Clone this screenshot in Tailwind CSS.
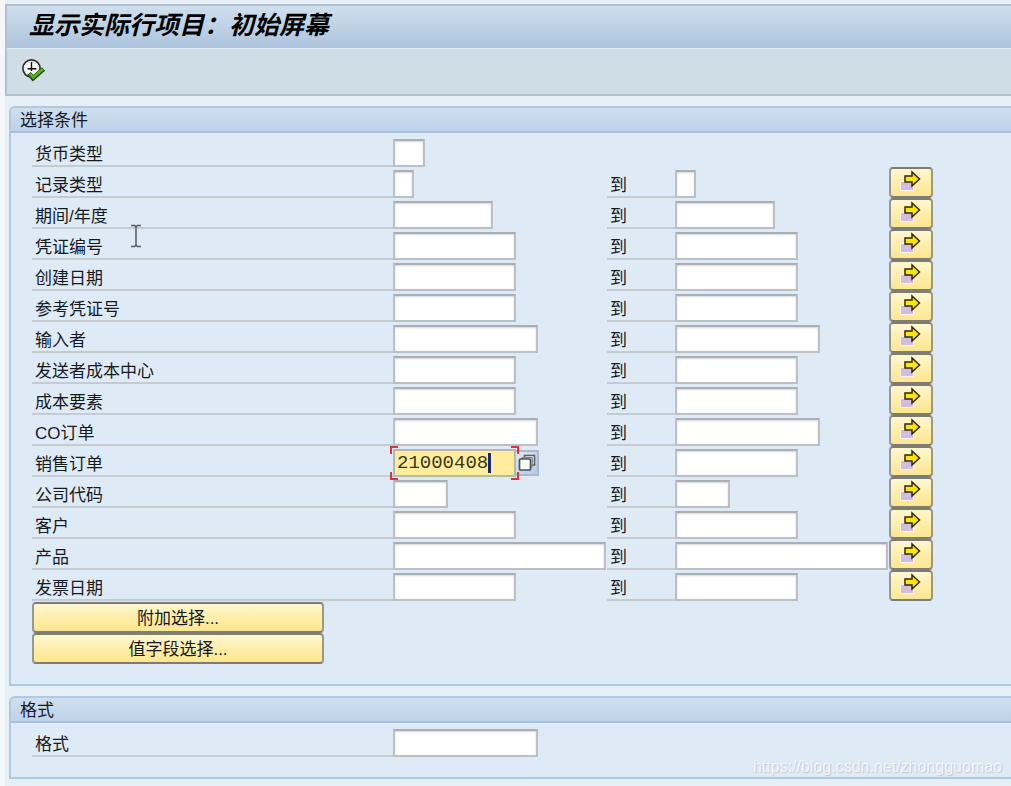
<!doctype html>
<html lang="zh-CN">
  <head>
    <meta charset="utf-8" />
    <meta name="viewport" content="width=device-width, initial-scale=1" />
    <script src="https://cdn.jsdelivr.net/npm/@tailwindcss/browser@4"></script>
    <title>显示实际行项目：初始屏幕</title>
  </head>
  <body
    class="relative min-h-screen overflow-x-hidden border-l-5 border-[#f4f7fa] bg-[#e7eff6] pt-1 font-['Liberation_Sans','Noto_Sans_CJK_SC',sans-serif] text-[17px] text-[#161a1e]"
  >
    <header class="border-y-2 border-l-2 border-[#b0c0d0] bg-[#cfdde7]">
      <h1
        class="flex h-[43px] items-center border-b border-[#e6eef5] bg-linear-to-b from-[#d0dfec] to-[#adc4dd] pb-1 pl-[22px] text-[25px] leading-none font-bold text-black italic"
      >
        显示实际行项目：初始屏幕
      </h1>
      <div class="flex h-[45px] items-center pl-3.5">
        <button type="button" aria-label="执行" class="pb-1">
          <svg class="block" width="26" height="24" viewBox="0 0 26 24">
            <circle cx="10.500" cy="10.500" r="8.600" fill="#fff" stroke="#2c2c2c" stroke-width="1.600" />
            <circle cx="10.500" cy="10.500" r="6.700" fill="none" stroke="#b9b9b9" stroke-width="1" stroke-dasharray="1.500 2" />
            <path d="M10.500 4v9M6.500 10.800h9" fill="none" stroke="#111" stroke-width="1.400" />
            <path d="M8 15.500l4 4.700L22.500 11" fill="none" stroke="#1f4d10" stroke-width="4.800" />
            <path d="M8.800 15.800l3.400 3.600L22 11" fill="none" stroke="#55b026" stroke-width="2.800" />
          </svg>
        </button>
      </div>
    </header>

    <main class="mt-2.5 ml-1 flex flex-col gap-2.5">
      <section class="rounded-tl-md border-y-2 border-l-2 border-[#b0c9e0] bg-[#deeaf6]">
        <h2
          class="h-[25px] rounded-tl-sm border-b-2 border-[#a6bfda] bg-linear-to-b from-[#cfdfee] to-[#bdd3ea] pl-[9px] leading-[26px]"
        >
          选择条件
        </h2>
        <form class="pt-[3px] pb-5 pl-[21px]">
          <div id="rows"></div>
          <div class="flex w-[292px] flex-col pt-px">
            <button
              type="button"
              class="h-[31px] rounded-sm border-2 border-x-[#9b9888] border-y-[#7f7d72] bg-linear-to-b from-[#fff7d2] via-[#feeeaa] to-[#fbe691] pt-px leading-none"
            >
              附加选择...
            </button>
            <button
              type="button"
              class="h-[31px] rounded-sm border-2 border-x-[#9b9888] border-y-[#7f7d72] bg-linear-to-b from-[#fff7d2] via-[#feeeaa] to-[#fbe691] pt-px leading-none"
            >
              值字段选择...
            </button>
          </div>
        </form>
      </section>

      <section class="rounded-tl-md border-y-2 border-l-2 border-[#b0c9e0] bg-[#deeaf6]">
        <h2
          class="h-[25px] rounded-tl-sm border-b-2 border-[#a6bfda] bg-linear-to-b from-[#cfdfee] to-[#bdd3ea] pl-[9px] leading-[26px]"
        >
          格式
        </h2>
        <div class="flex items-end pt-[3px] pb-5 pl-[21px]">
          <label for="layout" class="h-[31px] w-[361px] border-b-2 border-[#c6cbd0] pt-[5px] pl-[3px] leading-7">格式</label>
          <input
            id="layout"
            class="h-7 w-[145px] border-2 border-[#bcc0c5] border-t-[#abafb4] bg-white px-0.5 shadow-[inset_0_1px_2px_#d5d5d5] outline-none"
          />
        </div>
      </section>
    </main>

    <!-- mouse pointer -->
    <svg class="absolute top-[224px] left-[125px]" width="12" height="24" viewBox="0 0 12 24">
      <path d="M1 1.500h3.500l1.500 1 1.500-1H11M6 2v20M1 22.500h3.500l1.500-1 1.500 1H11" fill="none" stroke="#5a5f66" stroke-width="1.600" />
    </svg>
    <p
      class="absolute right-[9px] bottom-[7px] text-base leading-6 text-white/70 [text-shadow:1px_1px_1px_#c0cad6]"
    >
      https://blog.csdn.net/zhongguomao
    </p>

    <script>
      const widths = {
        1: "w-[21px]",
        2: "w-8",
        4: "w-[55px]",
        7: "w-[100px]",
        10: "w-[123px]",
        12: "w-[145px]",
        18: "w-[213px]",
      };

      const fields = [
        { label: "货币类型", size: 2, single: true },
        { label: "记录类型", size: 1 },
        { label: "期间/年度", size: 7 },
        { label: "凭证编号", size: 10 },
        { label: "创建日期", size: 10 },
        { label: "参考凭证号", size: 10 },
        { label: "输入者", size: 12 },
        { label: "发送者成本中心", size: 10 },
        { label: "成本要素", size: 10 },
        { label: "CO订单", size: 12 },
        { label: "销售订单", size: 10, value: "21000408", active: true },
        { label: "公司代码", size: 4 },
        { label: "客户", size: 10 },
        { label: "产品", size: 18 },
        { label: "发票日期", size: 10 },
      ];

      const inputClass =
        "block h-7 border-2 border-[#bcc0c5] border-t-[#abafb4] bg-white px-0.5 shadow-[inset_0_1px_2px_#d5d5d5] outline-none";
      const labelClass =
        "h-[31px] shrink-0 border-b-2 border-[#c6cbd0] pt-[5px] pl-[3px] leading-7";

      const arrow = `
        <svg class="block" width="22" height="22" viewBox="0 0 22 22">
          <rect x="0" y="11" width="14" height="10" fill="#fbf3ea" />
          <rect x="1" y="12" width="12" height="8" fill="#d2bddf" />
          <path d="M5 6h7V2L19.500 9L12 16V12H5z" fill="#ffe600" stroke="#2e2a08" stroke-width="1.500" />
        </svg>`;

      function activeField(id, value) {
        return `
          <div class="relative flex items-center">
            <input id="${id}" value="${value}" class="block h-7 w-[123px] border-2 border-[#b8b9a8] bg-[#ffec9c] px-0.5 font-['Liberation_Mono',monospace] text-[19px] text-[#3a3820] outline-none" />
            <span class="absolute top-1 left-[95px] h-5 w-[3px] bg-[#1c2670]"></span>
            <svg class="pointer-events-none absolute -top-[3px] -left-[3px]" width="129" height="34" viewBox="0 0 129 34">
              <path d="M1 8V1h7M121 1h7v7M128 26v7h-7M8 33H1v-7" fill="none" stroke="#e03038" stroke-width="2" />
            </svg>
            <button type="button" aria-label="值列表" class="flex h-[26px] w-[23px] items-center justify-center border-2 border-l-0 border-[#adbacb] bg-linear-to-br from-[#dfe8f3] to-[#b4c9e6]">
              <svg class="shrink-0" width="18" height="18" viewBox="0 0 18 18">
                <path d="M6.500 5V1.500H16.500v9.500h-3" fill="#f4f4f4" stroke="#5b6066" stroke-width="1.600" />
                <path d="M4 5V3.500H14.300V13h-2" fill="#c9ccd0" stroke="#7b8086" stroke-width="1" />
                <rect x="1.500" y="5" width="11" height="11" rx="1" fill="#fff" stroke="#4c5056" stroke-width="1.700" />
              </svg>
            </button>
          </div>`;
      }

      const rows = document.getElementById("rows");
      fields.forEach((field, i) => {
        const row = document.createElement("div");
        row.className = "flex h-[31px] items-end";
        const from = field.active
          ? activeField(`from-${i}`, field.value)
          : `<input id="from-${i}" class="${inputClass} ${widths[field.size]}" />`;
        row.innerHTML = `
          <label for="from-${i}" class="${labelClass} w-[361px]">${field.label}</label>
          <div class="w-[214px] shrink-0">${from}</div>`;
        if (!field.single) {
          row.innerHTML += `
            <label for="to-${i}" class="${labelClass} w-[68px]">到</label>
            <div class="w-[214px] shrink-0">
              <input id="to-${i}" class="${inputClass} ${widths[field.size]}" />
            </div>
            <button type="button" aria-label="多项选择" class="flex h-[31px] w-11 shrink-0 items-center justify-center rounded-sm border-2 border-x-[#9b9888] border-y-[#7f7d72] bg-linear-to-b from-[#fff7d2] via-[#feeeaa] to-[#fbe691] pb-[3px]">${arrow}</button>`;
        }
        rows.appendChild(row);
      });
    </script>
  </body>
</html>
